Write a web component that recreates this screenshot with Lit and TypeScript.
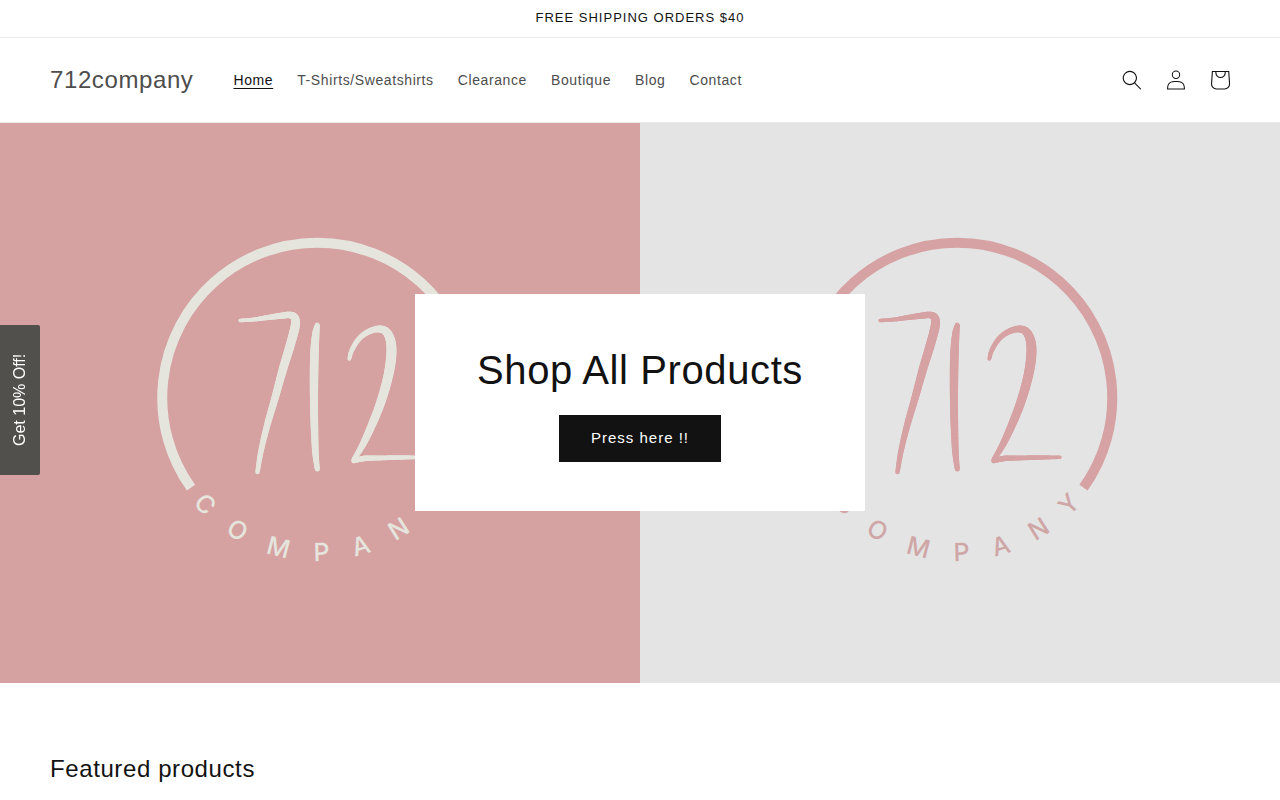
import { LitElement, html, css, svg } from "lit";
import { customElement, property } from "lit/decorators.js";

const NAV = ["Home", "T-Shirts/Sweatshirts", "Clearance", "Boutique", "Blog", "Contact"];

// Letters of the curved word with their angle around the ring's centre.
const RING_LETTERS: [string, number][] = [
  ["C", 46.5], ["O", 31], ["M", 14.5], ["P", -1.7], ["A", -16.5], ["N", -32], ["Y", -46.5],
];

// A brush stroke is a list of stops along its centre line: x, y, thickness.
type Stop = [number, number, number];

const BRUSH: Stop[][] = [
  [[240, 197.500, 3.5], [254, 196.500, 4], [268, 194.500, 5], [281, 192.800, 6], [290, 192, 6.5], [295, 195, 7.5], [295, 204, 9], [290, 223, 9],
    [283, 246, 8.5], [275, 275, 7.5], [267, 303, 6.5], [261, 328, 5.5], [257.500, 349, 4.5]],
  [[317.300, 202, 4.5], [315.800, 211, 7], [314.500, 230, 8.5], [314, 255, 8.5], [314, 280, 8], [314.500, 305, 7.5], [315.500, 330, 6.5], [317.300, 346, 5]],
  [[349.300, 236, 3.5], [351.500, 228, 4.5], [358, 217, 5], [367, 209.500, 5.5], [378, 206, 6.5], [386.500, 209, 8], [391, 220, 9.5],
    [391, 236, 10], [387.500, 256, 9.5], [380.500, 280, 9], [371, 304, 8], [362, 323, 6.5], [353.500, 337, 4.5]],
  [[353.500, 338, 4.5], [364, 335.500, 5.5], [378, 335, 5], [400, 334.500, 4.5], [420, 334.300, 3.5]],
];

const spline = (a: number, b: number, c: number, d: number, t: number) =>
  0.5 * (2 * b + (c - a) * t + (2 * a - 5 * b + 4 * c - d) * t * t + (3 * b - a - 3 * c + d) * t * t * t);

function smooth(stops: Stop[], steps = 8): Stop[] {
  const out: Stop[] = [];
  const last = stops.length - 1;
  for (let i = 0; i < last; i++) {
    const p = [stops[Math.max(0, i - 1)], stops[i], stops[i + 1], stops[Math.min(last, i + 2)]];
    for (let s = 0; s < steps; s++) {
      out.push([0, 1, 2].map((k) => spline(p[0][k], p[1][k], p[2][k], p[3][k], s / steps)) as Stop);
    }
  }
  out.push(stops[last]);
  return out;
}

@customElement("brand-banner")
class BrandBanner extends LitElement {
  @property({ reflect: true }) tone = "rose";

  static styles = css`
    :host { display: block; min-width: 0; background: #d6a2a1; color: #e5e5de; overflow: hidden; }
    :host([tone="light"]) { background: #e4e4e4; color: #d6a2a3; }
    .art { display: block; width: 100%; height: 100%; }
    .brush { stroke: currentColor; stroke-linecap: round; }
    .ring { fill: none; stroke: currentColor; stroke-width: 10; }
    .letter { font: 500 25px Inter, sans-serif; fill: currentColor; text-anchor: middle; }
    :host([tone="light"]) .letter { fill: #cfa6a6; }
  `;

  render() {
    return html`
      <svg class="art" viewBox="0 0 640 560" preserveAspectRatio="xMidYMid slice" role="img" aria-label="712 Company">
        <path class="ring" d="M191 364.7A155 155 0 1 1 443.500 364.700" />
        <g class="brush">
          ${BRUSH.map((stops) => {
            const pts = smooth(stops);
            return pts.slice(1).map(
              ([x, y, w], i) => svg`<line x1=${pts[i][0]} y1=${pts[i][1]} x2=${x} y2=${y} stroke-width=${w} />`
            );
          })}
        </g>
        ${RING_LETTERS.map(
          ([ch, angle]) => svg`<text class="letter" x="317" y="438" transform=${`rotate(${angle} 317 275)`}>${ch}</text>`
        )}
      </svg>
    `;
  }
}

@customElement("app-root")
class AppRoot extends LitElement {
  static styles = css`
    :host {
      display: block;
      background: #fff;
      color: #121212;
      font-family: "Liberation Sans", Arial, sans-serif;
    }
    .announcement {
      margin: 0;
      padding: 7px 20px 9px;
      border-bottom: 1px solid #ebebeb;
      text-align: center;
      font-size: 13px;
      line-height: 21px;
      letter-spacing: 1px;
    }
    .header {
      display: flex;
      align-items: center;
      gap: 28px;
      padding: 20px 38px 20px 50px;
      border-bottom: 1px solid #ebebeb;
    }
    .brand {
      color: #4d4d4d;
      font-size: 24px;
      line-height: 36px;
      letter-spacing: 0.025em;
      text-decoration: none;
    }
    .menu { display: flex; flex-wrap: wrap; flex: 1; }
    .link {
      padding: 12px;
      color: #4d4d4d;
      font-size: 14px;
      line-height: 20px;
      letter-spacing: 0.043em;
      text-decoration: none;
    }
    .link.active { color: #121212; text-decoration: underline; text-underline-offset: 3px; }
    .tools { display: flex; }
    .tool {
      display: grid;
      place-items: center;
      width: 44px;
      height: 44px;
      padding: 0;
      border: 0;
      background: none;
      color: #121212;
      cursor: pointer;
    }
    .icon { width: 20px; height: 20px; fill: currentColor; }
    .icon.bag { width: 44px; height: 44px; }
    .hero { display: grid; grid-template-columns: 1fr 1fr; grid-template-rows: 560px; }
    .panel { grid-row: 1; grid-column: 1; }
    .panel.second { grid-column: 2; }
    .card {
      grid-row: 1;
      grid-column: 1 / 3;
      place-self: center;
      z-index: 1;
      box-sizing: border-box;
      width: 450px;
      max-width: 90%;
      margin-bottom: 2px;
      padding: 50px 40px 49px;
      background: #fff;
      display: flex;
      flex-direction: column;
      align-items: center;
      gap: 19px;
    }
    .title { margin: 0; font-size: 40px; font-weight: 400; line-height: 52px; letter-spacing: 0.015em; text-align: center; }
    .cta {
      padding: 0 32px 2px;
      border: 0;
      background: #121212;
      color: #fff;
      font-family: inherit;
      font-size: 15px;
      line-height: 45px;
      letter-spacing: 1px;
      cursor: pointer;
    }
    .featured { padding: 70px 50px 0; }
    .subtitle { margin: 0; font-size: 24px; font-weight: 400; line-height: 31px; letter-spacing: 0.025em; }
    .promo {
      position: fixed;
      left: 0;
      top: 50%;
      z-index: 2;
      width: 40px;
      height: 150px;
      padding: 0;
      border: 0;
      border-radius: 2px 0 0 2px;
      background: #51504c;
      color: #fff;
      font-family: inherit;
      font-size: 16px;
      writing-mode: vertical-rl;
      transform: translateY(-50%) rotate(180deg);
      cursor: pointer;
    }
  `;

  render() {
    return html`
      <p class="announcement">FREE SHIPPING ORDERS $40</p>
      <header class="header">
        <a class="brand" href="#">712company</a>
        <nav class="menu">
          ${NAV.map((name, i) => html`<a class=${i === 0 ? "link active" : "link"} href="#">${name}</a>`)}
        </nav>
        <div class="tools">
          <button class="tool" aria-label="Search">
            <svg class="icon" viewBox="0 0 18 19"><path fill-rule="evenodd" d="M11.03 11.68A5.784 5.784 0 112.85 3.5a5.784 5.784 0 018.18 8.18zm.26 1.12a6.78 6.78 0 11.72-.7l5.4 5.4a.5.5 0 11-.71.7l-5.41-5.4z" /></svg>
          </button>
          <button class="tool" aria-label="Log in">
            <svg class="icon" viewBox="0 0 18 19"><path fill-rule="evenodd" d="M6 4.5a3 3 0 116 0 3 3 0 01-6 0zm3-4a4 4 0 100 8 4 4 0 000-8zm5.58 12.15c1.12.82 1.83 2.24 1.91 4.85H1.51c.08-2.6.79-4.03 1.9-4.85C4.66 11.75 6.5 11.5 9 11.5s4.35.26 5.58 1.15zM9 10.5c-2.5 0-4.65.24-6.17 1.35C1.27 12.98.5 14.93.5 18v.5h17V18c0-3.07-.77-5.02-2.33-6.15-1.52-1.1-3.67-1.35-6.17-1.35z" /></svg>
          </button>
          <button class="tool" aria-label="Cart">
            <svg class="icon bag" viewBox="0 0 40 40"><path fill-rule="evenodd" d="M15.75 11.8h-3.16l-.77 11.6a5 5 0 004.99 5.34h7.38a5 5 0 004.99-5.33L28.4 11.8zm0 1h-2.22l-.71 10.67a4 4 0 003.99 4.27h7.38a4 4 0 004-4.27l-.72-10.67h-2.22v.63a4.75 4.75 0 11-9.5 0zm8.5 0h-7.5v.63a3.75 3.75 0 107.5 0z" /></svg>
          </button>
        </div>
      </header>
      <section class="hero">
        <brand-banner class="panel" tone="rose"></brand-banner>
        <brand-banner class="panel second" tone="light"></brand-banner>
        <div class="card">
          <h2 class="title">Shop All Products</h2>
          <button class="cta">Press here !!</button>
        </div>
      </section>
      <section class="featured">
        <h2 class="subtitle">Featured products</h2>
      </section>
      <button class="promo">Get 10% Off!</button>
    `;
  }
}
